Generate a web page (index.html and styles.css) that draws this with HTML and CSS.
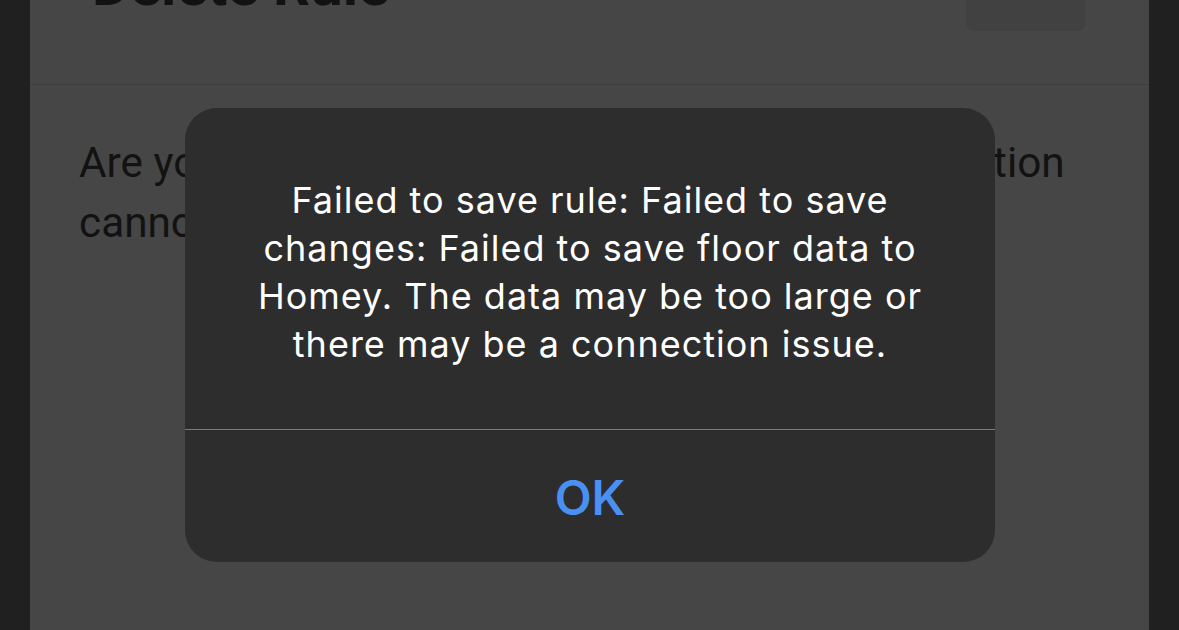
FILE: index.html
```html
<!DOCTYPE html>
<html lang="en">
  <head>
    <meta charset="UTF-8" />
    <meta name="viewport" content="width=device-width, initial-scale=1.0" />
    <title>Delete Rule</title>
    <link rel="stylesheet" href="styles.css">
  </head>
  <body>
    <main class="sheet">
      <div class="sheet_header">
        <h1 class="sheet_title">Delete Rule</h1>
        <button class="close_button"></button>
      </div>
      <div class="sheet_body">
        <p>Are you sure you want to delete this rule? This action cannot be undone.</p>
      </div>
    </main>

    <div class="alert">
      <div class="alert_message">
        Failed to save rule: Failed to save changes: Failed to save floor data to Homey. The data may be too large or there may be a connection issue.
      </div>
      <button class="alert_button">OK</button>
    </div>
  </body>
</html>
```

FILE: styles.css
```css
body {
  margin: 0;

  --outer: #202020;
  --sheet: #464646;
  --ink: #121212;
  --alert: #2d2d2d;
  --blue: #4a90f2;

  background-color: var(--outer);
  font-family: "Roboto", sans-serif;
  height: 630px;
  overflow: hidden;
}

.sheet {
  margin: 0 30px;
  height: 630px;
  background-color: var(--sheet);
}

.sheet_header {
  height: 84px;
  display: flex;
  justify-content: space-between;
  align-items: flex-start;
  padding: 0 64px 0 62px;
  border-bottom: 1px solid #3e3e3e;
  overflow: hidden;
}

.sheet_title {
  margin: -49px 0 0;
  font-size: 58px;
  font-weight: 700;
  line-height: normal;
  color: var(--ink);
}

.close_button {
  margin-top: -20px;
  width: 119px;
  height: 51px;
  border: none;
  border-radius: 8px;
  background-color: #414141;
}

.sheet_body {
  padding: 0 49px;
}

.sheet_body p {
  margin: 48px 0 0;
  font-size: 42.3px;
  line-height: 60px;
  color: var(--ink);
}

.alert {
  position: absolute;
  left: 185px;
  top: 108px;
  width: 810px;
  height: 454px;
  display: flex;
  flex-direction: column;
  background-color: var(--alert);
  border-radius: 32px;
  overflow: hidden;
}

.alert_message {
  height: 322px;
  box-sizing: border-box;
  padding: 68px 40px 0;
  border-bottom: 1px solid #7a7a7a;
  text-align: center;
  font-family: "Inter", sans-serif;
  font-size: 36px;
  letter-spacing: 1px;
  line-height: 48px;
  color: #ffffff;
}

.alert_button {
  flex: 1;
  padding-top: 4px;
  border: none;
  background: none;
  font-family: "Inter", sans-serif;
  font-size: 48px;
  font-weight: 600;
  color: var(--blue);
  cursor: pointer;
}
```
